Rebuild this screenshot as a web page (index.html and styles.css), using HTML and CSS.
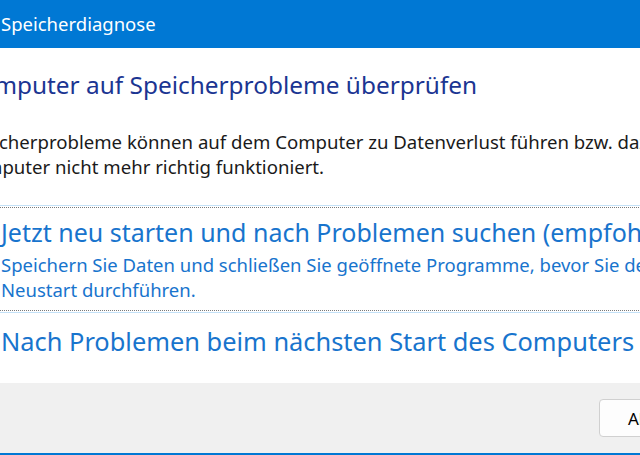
FILE: index.html
```html
<!DOCTYPE html>
<html lang="de">
<head>
<meta charset="utf-8">
<title>Speicherdiagnose</title>
<link rel="stylesheet" href="styles.css">
</head>
<body>
<div class="window">
  <header class="titlebar"><span class="title">Speicherdiagnose</span></header>
  <main class="content">
    <h1 class="instruction">Computer auf Speicherprobleme überprüfen</h1>
    <p class="desc">Speicherprobleme können auf dem Computer zu Datenverlust führen bzw. dazu, dass der<br>Computer nicht mehr richtig funktioniert.</p>
    <div class="commands">
      <a class="cmd cmd-default" href="#">
        <span class="cmd-focus">
          <svg class="cmd-arrow" viewBox="0 0 20 20" width="20" height="20"><path d="M3 10h13M11 5l5 5-5 5" fill="none" stroke="#1874cd" stroke-width="2"/></svg>
          <span class="cmd-text">
            <span class="cmd-title">Jetzt neu starten und nach Problemen suchen (empfohlen)</span>
            <span class="cmd-note">Speichern Sie Daten und schließen Sie geöffnete Programme, bevor Sie den<br>Neustart durchführen.</span>
          </span>
        </span>
      </a>
      <a class="cmd" href="#">
        <span class="cmd-focus">
          <svg class="cmd-arrow" viewBox="0 0 20 20" width="20" height="20"><path d="M3 10h13M11 5l5 5-5 5" fill="none" stroke="#1874cd" stroke-width="2"/></svg>
          <span class="cmd-text">
            <span class="cmd-title cmd-title-lg">Nach Problemen beim nächsten Start des Computers suchen</span>
          </span>
        </span>
      </a>
    </div>
  </main>
  <footer class="footer">
    <button class="btn" type="button">Abbrechen</button>
  </footer>
</div>
</body>
</html>
```

FILE: styles.css
```css
* { box-sizing: border-box; margin: 0; padding: 0; }
html, body { width: 640px; height: 455px; overflow: hidden; background: #fff; }
body { font-family: "Noto Sans", "Open Sans", sans-serif; color: #1a1a1a; }

.window { width: 640px; height: 455px; display: flex; flex-direction: column; }

.titlebar {
  height: 48px; flex: none; background: #0078d4; color: #fff;
  display: flex; align-items: center; padding-left: 1px;
  font-size: 18.5px; line-height: 24px;
}

.content {
  flex: 1; display: flex; flex-direction: column;
  margin-left: -31px; width: 980px;
}

.instruction {
  font-weight: 400; font-size: 24.4px; line-height: 32px;
  color: #1b3592; margin: 21px 0 0 -5px; white-space: nowrap;
}

.desc {
  font-size: 18.6px; line-height: 25px; margin: 28px 0 0 -7px; white-space: nowrap;
  color: #1a1a1a;
}

.commands { margin-top: 26px; display: flex; flex-direction: column; gap: 1px; }

.cmd {
  display: block; text-decoration: none; color: #1874cd;
  border: 1px solid transparent; padding: 1px;
}
.cmd-default { border-color: #c4e1f7; }

.cmd-focus {
  display: flex; align-items: flex-start; gap: 9px;
  border: 1px dotted transparent; padding: 8px 8px 8px 0;
}
.cmd-default .cmd-focus { border-color: #7a7a7a; }

.cmd-arrow { flex: none; margin-top: 7px; }

.cmd-text { display: flex; flex-direction: column; white-space: nowrap; }
.cmd-title { font-size: 25px; line-height: 32px; }
.cmd-title-lg { font-size: 25.4px; }
.cmd-note { font-size: 18.5px; line-height: 25px; margin-top: 4px; }

.footer {
  height: 72px; flex: none; background: #f0f0f0;
  border-bottom: 2px solid #0078d4;
  display: flex; align-items: flex-start;
  padding: 16px 0 0 599px;
}

.btn {
  flex: none; width: 130px; height: 38px;
  background: #fdfdfd; border: 1px solid #d0d0d0; border-radius: 4px;
  font-family: inherit; font-size: 17px; color: #000;
  text-align: left; padding-left: 28px;
}
```
